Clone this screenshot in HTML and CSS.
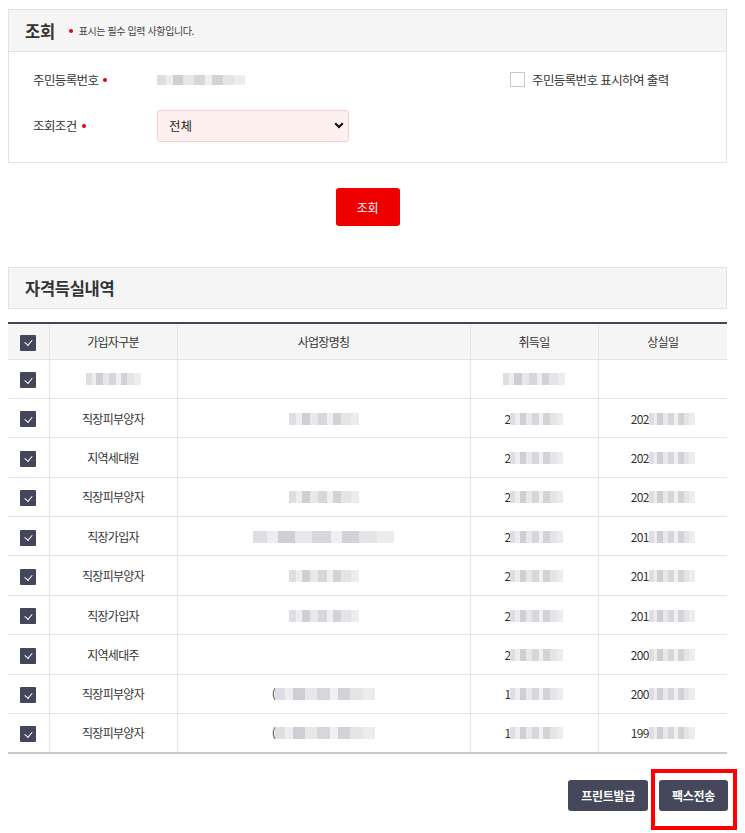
FILE: index.html
```html
<!DOCTYPE html>
<html lang="ko">
<head>
<meta charset="utf-8">
<link rel="stylesheet" href="styles.css">
</head>
<body>
<div class="page">
  <section class="search-box">
    <div class="box-head">
      <h2 class="box-title">조회</h2>
      <span class="req-dot"></span>
      <span class="req-note">표시는 필수 입력 사항입니다.</span>
    </div>
    <div class="box-body">
      <div class="form-row">
        <div class="form-label">주민등록번호<span class="req-dot"></span></div>
        <div class="form-value"><span class="px px-id"></span></div>
        <label class="chk-label"><span class="chk-empty"></span>주민등록번호 표시하여 출력</label>
      </div>
      <div class="form-row">
        <div class="form-label">조회조건<span class="req-dot"></span></div>
        <div class="form-value">
          <div class="select">
            <span>전체</span>
            <svg class="chev" width="10" height="7" viewBox="0 0 10 7"><path d="M1.2 1.2 5 5 8.8 1.2" fill="none" stroke="#111" stroke-width="2.2"/></svg>
          </div>
        </div>
      </div>
    </div>
  </section>

  <div class="btn-center"><button class="btn-red">조회</button></div>

  <div class="section-head"><h2 class="box-title">자격득실내역</h2></div>

  <table class="grid">
    <colgroup>
      <col class="c-chk"><col class="c-type"><col class="c-name"><col class="c-date"><col class="c-date2">
    </colgroup>
    <thead>
      <tr><th><span class="chk"></span></th><th>가입자구분</th><th>사업장명칭</th><th>취득일</th><th>상실일</th></tr>
    </thead>
    <tbody>
      <tr><td><span class="chk"></span></td><td><span class="px px-s"></span></td><td></td><td><span class="px px-d0"></span></td><td></td></tr>
      <tr><td><span class="chk"></span></td><td>직장피부양자</td><td><span class="px px-m"></span></td><td>2<span class="px px-d"></span></td><td>202<span class="px px-e"></span></td></tr>
      <tr><td><span class="chk"></span></td><td>지역세대원</td><td></td><td>2<span class="px px-d"></span></td><td>202<span class="px px-e"></span></td></tr>
      <tr><td><span class="chk"></span></td><td>직장피부양자</td><td><span class="px px-m"></span></td><td>2<span class="px px-d"></span></td><td>202<span class="px px-e"></span></td></tr>
      <tr><td><span class="chk"></span></td><td>직장가입자</td><td><span class="px px-w"></span></td><td>2<span class="px px-d"></span></td><td>201<span class="px px-e"></span></td></tr>
      <tr><td><span class="chk"></span></td><td>직장피부양자</td><td><span class="px px-m"></span></td><td>2<span class="px px-d"></span></td><td>201<span class="px px-e"></span></td></tr>
      <tr><td><span class="chk"></span></td><td>직장가입자</td><td><span class="px px-m"></span></td><td>2<span class="px px-d"></span></td><td>201<span class="px px-e"></span></td></tr>
      <tr><td><span class="chk"></span></td><td>지역세대주</td><td></td><td>2<span class="px px-d"></span></td><td>200<span class="px px-e"></span></td></tr>
      <tr><td><span class="chk"></span></td><td>직장피부양자</td><td>(<span class="px px-l"></span></td><td>1<span class="px px-d"></span></td><td>200<span class="px px-e"></span></td></tr>
      <tr><td><span class="chk"></span></td><td>직장피부양자</td><td>(<span class="px px-l"></span></td><td>1<span class="px px-d"></span></td><td>199<span class="px px-e"></span></td></tr>
    </tbody>
  </table>

  <div class="btn-bar">
    <button class="btn-dark">프린트발급</button>
    <button class="btn-dark btn-marked">팩스전송</button>
  </div>
</div>
</body>
</html>
```

FILE: styles.css
```css
* { box-sizing: border-box; }
body {
  margin: 9px 8px 0;
  font-family: "Noto Sans CJK KR", "Noto Sans", sans-serif;
  color: #333;
  background: #fff;
}
.page { width: 719px; padding-bottom: 24px; }

.search-box { border: 1px solid #e2e2e2; }
.box-head {
  height: 42px;
  background: #f5f5f5;
  border-bottom: 1px solid #e2e2e2;
  display: flex;
  align-items: center;
  padding-left: 16px;
}
.box-title {
  margin: 0;
  font-size: 16.5px;
  font-weight: 700;
  color: #333;
  letter-spacing: -0.3px;
}
.box-head .req-dot { margin-left: 14px; margin-right: 6px; }
.req-note { font-size: 10px; color: #444; letter-spacing: -0.4px; }
.req-dot {
  display: inline-block;
  width: 4px;
  height: 4px;
  border-radius: 50%;
  background: #e60012;
  margin-left: 5px;
  vertical-align: 3px;
}

.box-body {
  padding: 12px 24px 21px;
  display: flex;
  flex-direction: column;
  gap: 15px;
}
.form-row { display: flex; align-items: center; height: 31px; }
.form-label { width: 124px; font-size: 12.5px; color: #333; letter-spacing: -0.6px; }
.form-value { width: 353px; display: flex; align-items: center; }
.chk-label { display: flex; align-items: center; font-size: 12.5px; color: #333; gap: 7px; letter-spacing: -0.6px; }
.chk-empty { width: 15px; height: 15px; border: 1px solid #c8c8c8; background: #fff; }

.select {
  width: 192px;
  height: 32px;
  background: #fff0f0;
  border: 1px solid #f6cccc;
  border-radius: 3px;
  display: flex;
  align-items: center;
  justify-content: space-between;
  padding: 0 4px 0 11px;
  font-size: 12.5px;
  color: #222;
}

.btn-center { display: flex; justify-content: center; margin-top: 25px; }
.btn-red {
  width: 64px;
  height: 38px;
  border: 0;
  border-radius: 3px;
  background: #ee0000;
  color: #fff;
  font-family: inherit;
  font-size: 12px;
  letter-spacing: -0.4px;
}

.section-head {
  margin-top: 41px;
  height: 42px;
  background: #f5f5f5;
  border: 1px solid #e2e2e2;
  display: flex;
  align-items: center;
  padding-left: 16px;
}

.grid {
  margin-top: 13px;
  width: 719px;
  border-collapse: collapse;
  table-layout: fixed;
  border-top: 2px solid #43455a;
  border-bottom: 2px solid #c9c9cc;
  font-size: 12px;
  color: #333;
  letter-spacing: -0.7px;
}
.c-chk { width: 41px; }
.c-type { width: 128px; }
.c-name { width: 293px; }
.c-date { width: 128px; }
.c-date2 { width: 129px; }
.grid th {
  height: 36px;
  background: #f5f5f5;
  font-weight: 400;
  border-left: 1px solid #e3e3e8;
  border-bottom: 1px solid #e3e3e8;
  text-align: center;
}
.grid td {
  height: 39.4px;
  border-left: 1px solid #e3e3e8;
  border-bottom: 1px solid #e3e3e8;
  text-align: center;
  padding: 0;
}
.grid th:first-child, .grid td:first-child { border-left: 0; }
.grid tr:last-child td { border-bottom: 0; }

.chk {
  display: inline-block;
  width: 16px;
  height: 16px;
  background: #44465a;
  border-radius: 1px;
  vertical-align: middle;
  position: relative;
}
.chk::after {
  content: "";
  position: absolute;
  left: 5.5px;
  top: 3.5px;
  width: 3.5px;
  height: 6px;
  border-right: 1.2px solid #fff;
  border-bottom: 1.2px solid #fff;
  transform: rotate(40deg);
}

.px {
  display: inline-block;
  height: 12px;
  vertical-align: -1px;
  background:
    linear-gradient(90deg, #d7d5da 0 10%, #e9e8ec 10% 18%, #c4c2c9 18% 30%, #e2e1e4 30% 42%, #cfccd2 42% 55%, #ecebee 55% 63%, #c9c6cd 63% 75%, #dedde1 75% 88%, #e8e7ea 88% 100%);
  opacity: 0.8;
}
.px-id { width: 88px; height: 10px; }
.px-s { width: 55px; }
.px-m { width: 70px; }
.px-w { width: 141px; }
.px-l { width: 100px; }
.px-d0 { width: 62px; }
.px-d { width: 53px; }
.px-e { width: 46px; }

.btn-bar {
  margin-top: 26px;
  display: flex;
  justify-content: flex-end;
  gap: 11px;
  margin-right: -1px;
}
.btn-dark {
  height: 31px;
  padding: 0 13px;
  border: 0;
  border-radius: 3px;
  background: #45475a;
  color: #fff;
  font-family: inherit;
  font-size: 12px;
  font-weight: 700;
  letter-spacing: -0.3px;
}
.btn-marked { position: relative; }
.btn-marked::after {
  content: "";
  position: absolute;
  top: -11px;
  left: -8px;
  right: -9px;
  bottom: -19px;
  border: 4px solid #ff0000;
}
```
